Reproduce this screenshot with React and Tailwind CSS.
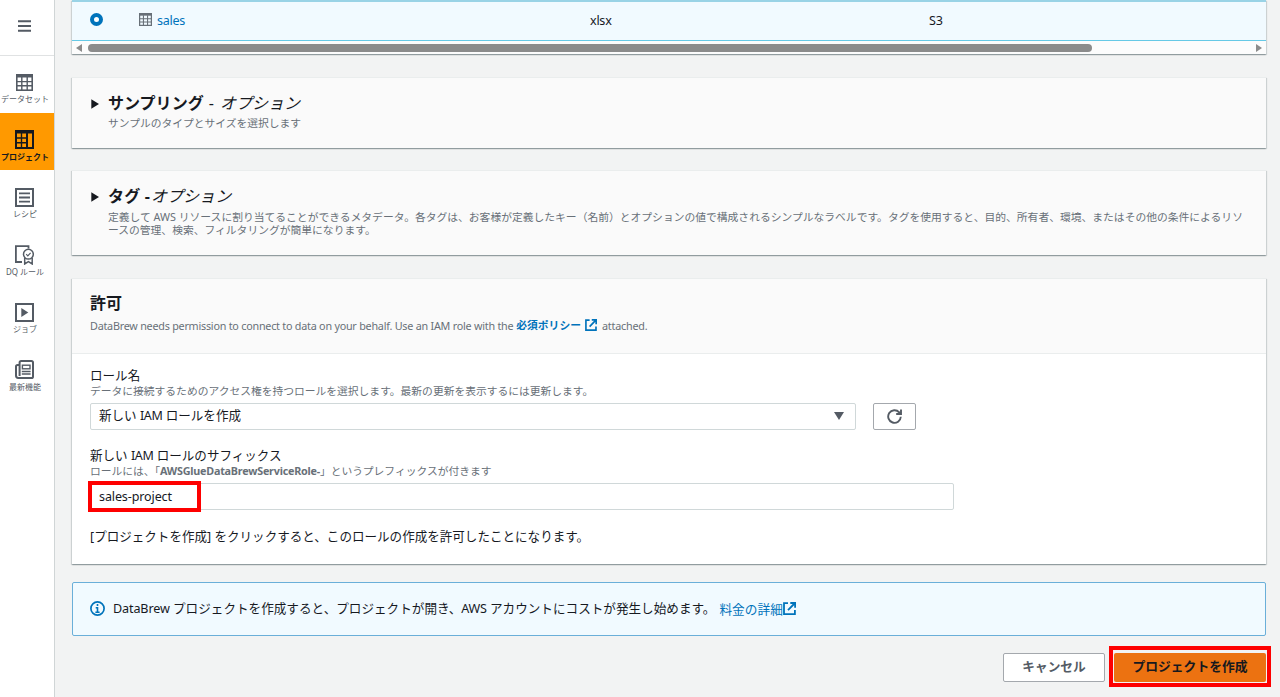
const cardShadow =
  "shadow-[0_1px_1px_0_rgba(0,28,36,0.22),1px_1px_1px_0_rgba(0,28,36,0.12),-1px_1px_1px_0_rgba(0,28,36,0.12)]";

function GridIcon({ className }) {
  return (
    <svg className={className} viewBox="0 0 17 17" fill="none" stroke="currentColor">
      <rect x="0.8" y="0.8" width="15.4" height="15.4" strokeWidth="1.6" />
      <path d="M1 2h15" strokeWidth="3" />
      <path d="M1 7.6h15M1 11.8h15M5.8 3v13M11.2 3v13" strokeWidth="1.4" />
    </svg>
  );
}

function ProjectIcon() {
  return (
    <svg className="h-[19px] w-[19px]" viewBox="0 0 19 19" fill="none" stroke="currentColor">
      <rect x="1" y="1" width="17" height="17" strokeWidth="2" />
      <path d="M1 2h17" strokeWidth="3" />
      <path d="M1 8h11M1 12.7h11M6.5 3v15" strokeWidth="1.4" />
      <path d="M12 3v15" strokeWidth="2" />
    </svg>
  );
}

function RecipeIcon() {
  return (
    <svg className="h-[19px] w-[19px]" viewBox="0 0 19 19" fill="none" stroke="currentColor" strokeWidth="2">
      <rect x="1" y="1" width="17" height="17" />
      <path d="M4 5.4h11M4 9.5h11M4 13.6h11" strokeWidth="1.9" />
    </svg>
  );
}

function RuleIcon() {
  return (
    <svg className="h-[20px] w-[19px]" viewBox="0 0 19 20" fill="none" stroke="currentColor" strokeWidth="1.5">
      <path d="M7 17H0.9V1.2h12.6v2.4" strokeWidth="1.8" />
      <circle cx="13.4" cy="9.2" r="4.9" />
      <path d="M11.2 9.2l1.6 1.6 2.8-3" strokeWidth="1.2" />
      <path d="M9.7 13v6l3.7-2.3 3.8 2.3v-6" strokeWidth="1.5" />
    </svg>
  );
}

function JobIcon() {
  return (
    <svg className="h-[19px] w-[19px]" viewBox="0 0 19 19" fill="none" stroke="currentColor" strokeWidth="2">
      <rect x="1" y="1" width="17" height="17" />
      <path d="M6.3 4.9l7 4.6-7 4.6z" fill="currentColor" stroke="none" />
    </svg>
  );
}

function NewsIcon() {
  return (
    <svg className="h-[19px] w-[19px]" viewBox="0 0 19 19" fill="none" stroke="currentColor" strokeWidth="2">
      <path d="M4.6 16V2.6Q4.6 1 6.2 1H16.4Q18 1 18 2.6V16.4Q18 18 16.4 18H3.2Q1 18 1 15.6V6.6Q1 5 2.6 5H4.4" />
      <rect x="7.4" y="5.2" width="7.6" height="3.6" strokeWidth="1.4" />
      <path d="M6.8 11.4h8.8M6.8 14.1h8.8" strokeWidth="1.5" />
    </svg>
  );
}

function ExternalIcon({ className }) {
  return (
    <svg className={className} viewBox="0 0 13 13" fill="none" stroke="currentColor" strokeWidth="1.8">
      <path d="M5 1.2H1v10.9h10.9V8" />
      <path d="M7.3 1h4.8v4.8M12 1L5 8.2" />
    </svg>
  );
}

const navItems = [
  { label: "データセット", icon: <GridIcon className="h-[17px] w-[17px]" /> },
  { label: "プロジェクト", icon: <ProjectIcon />, active: true },
  { label: "レシピ", icon: <RecipeIcon /> },
  { label: "DQ ルール", icon: <RuleIcon /> },
  { label: "ジョブ", icon: <JobIcon /> },
  { label: "最新機能", icon: <NewsIcon /> },
];

function Sidebar() {
  return (
    <nav className="flex w-[55px] shrink-0 flex-col border-r border-[#d0d5d6] bg-white text-[#545b64]">
      <div className="flex h-14 items-center justify-center border-b border-[#e0e2e3] pr-[5px]">
        <svg className="mt-[-3px] h-[12px] w-[13px]" viewBox="0 0 13 12" stroke="currentColor" strokeWidth="1.9">
          <path d="M0 1.3h13M0 6h13M0 10.7h13" />
        </svg>
      </div>
      <div className="mt-[-0.6px] flex flex-col">
        {navItems.map((item) => (
          <div
            key={item.label}
            className={
              item.active
                ? "flex h-[57.5px] flex-col items-center bg-[#ff9900] pr-[4px] pt-[16.6px] font-bold text-[#16191f]"
                : "flex h-[57.5px] flex-col items-center pr-[4px] pt-[16.6px]"
            }
          >
            <div className="flex h-[20px] items-center pr-px">{item.icon}</div>
            <span className="mt-[1.2px] whitespace-nowrap text-[8px] leading-[11px]">{item.label}</span>
          </div>
        ))}
      </div>
    </nav>
  );
}

function Caret() {
  return (
    <svg className="mt-[6px] h-[10px] w-[8px] shrink-0" viewBox="0 0 8 10">
      <path d="M0.3 0.3L8 5L0.3 9.7z" fill="#16191f" />
    </svg>
  );
}

export default function App() {
  return (
    <div className="flex h-[697px] w-[1280px] overflow-hidden bg-[#f2f3f3] font-['Noto_Sans','Noto_Sans_CJK_JP',sans-serif] text-[12.55px] leading-[18px] text-[#16191f]">
      <Sidebar />
      <main className="flex w-[1211px] flex-col pl-[17px]">
        <section className={`flex h-[54px] shrink-0 flex-col bg-white ${cardShadow}`}>
          <div className="flex h-[41px] items-center border-b border-t-2 border-b-[#66c9e6] border-t-[#99d3e6] bg-[#f1faff] pb-[3px]">
            <div className="ml-[18px] h-[13px] w-[13px] rounded-full border-4 border-[#0073bb] bg-white" />
            <GridIcon className="ml-[36px] h-[13px] w-[13px] text-[#687078]" />
            <span className="ml-[5px] w-[433px] pt-[2px] tracking-[-0.02em] text-[#0073bb]">sales</span>
            <span className="w-[339px] pt-[2px] tracking-[-0.02em]">xlsx</span>
            <span className="pt-[2px] tracking-[-0.02em]">S3</span>
          </div>
          <div className="flex h-[13px] items-center bg-[#fcfcfc] pl-[4px] pr-[4px]">
            <svg className="h-[8px] w-[6px]" viewBox="0 0 6 8">
              <path d="M6 0v8L0 4z" fill="#8b8b8b" />
            </svg>
            <div className="ml-[6px] h-[8px] w-[1004px] rounded-full bg-[#8b8b8b]" />
            <svg className="ml-auto h-[8px] w-[6px]" viewBox="0 0 6 8">
              <path d="M0 0v8L6 4z" fill="#8b8b8b" />
            </svg>
          </div>
        </section>

        <section className={`mt-[23px] flex h-[71px] shrink-0 gap-[9px] border-t border-[#eaeded] bg-[#fafafa] pl-[19px] pt-[15px] ${cardShadow}`}>
          <Caret />
          <div>
            <h2 className="whitespace-nowrap text-[16.05px] leading-[20px]">
              <b>サンプリング</b>
              <span className="ml-[5px] mr-[6px]">-</span>
              <i>オプション</i>
            </h2>
            <p className="mt-[3px] text-[10.77px] leading-[14px] text-[#687078]">サンプルのタイプとサイズを選択します</p>
          </div>
        </section>

        <section className={`mt-[22px] flex h-[85px] shrink-0 gap-[9px] border-t border-[#eaeded] bg-[#fafafa] pl-[19px] pt-[15px] ${cardShadow}`}>
          <Caret />
          <div>
            <h2 className="whitespace-nowrap text-[16.05px] leading-[20px]">
              <b className="tracking-[0.01em]">タグ -</b>
              <i className="ml-px">オプション</i>
            </h2>
            <p className="mt-[4px] whitespace-nowrap text-[10.79px] leading-[13.4px] text-[#687078]">
              定義して AWS リソースに割り当てることができるメタデータ。各タグは、お客様が定義したキー（名前）とオプションの値で構成されるシンプルなラベルです。タグを使用すると、目的、所有者、環境、またはその他の条件によるリソ
              <br />
              ースの管理、検索、フィルタリングが簡単になります。
            </p>
          </div>
        </section>

        <section className={`mt-[23px] flex h-[286px] shrink-0 flex-col border-t border-[#eaeded] bg-white ${cardShadow}`}>
          <header className="h-[75px] shrink-0 border-b border-[#eaeded] bg-[#fafafa] pl-[18px] pt-[14px]">
            <h2 className="text-[16px] font-bold leading-[20px]">許可</h2>
            <p className="mt-[3px] flex items-center whitespace-nowrap text-[10.77px] leading-[16px] text-[#687078]">
              <span className="pt-[2px] tracking-[-0.021em]">
                DataBrew needs permission to connect to data on your behalf. Use an IAM role with the
              </span>
              <b className="ml-[3px] text-[#0073bb]">必須ポリシー</b>
              <ExternalIcon className="ml-[4px] h-[12px] w-[12px] text-[#0073bb]" />
              <span className="ml-[5px] pt-[2px] tracking-[-0.018em]">attached.</span>
            </p>
          </header>
          <div className="flex flex-col pl-[18px] pt-[13px]">
            <label className="leading-[18px]">ロール名</label>
            <p className="mt-[-1px] text-[10.77px] leading-[14px] text-[#687078]">
              データに接続するためのアクセス権を持つロールを選択します。最新の更新を表示するには更新します。
            </p>
            <div className="mt-[5px] flex gap-[17px]">
              <div className="flex h-[27px] w-[766px] items-center justify-between rounded-[2px] border border-[#d0d8d9] pb-px pl-[8px] pr-[11px]">
                <span>
                  新しい <span className="tracking-[-0.03em]">IAM</span> ロールを作成
                </span>
                <svg className="h-[8px] w-[10px]" viewBox="0 0 10 8">
                  <path d="M0 0h10L5 8z" fill="#545b64" />
                </svg>
              </div>
              <button className="flex h-[27px] w-[43px] items-center justify-center rounded-[2px] border border-[#a4a8ad] text-[#545b64]">
                <svg className="h-[15px] w-[15px]" viewBox="0 0 15 15" fill="none" stroke="currentColor" strokeWidth="1.9">
                  <path d="M13.8 7.8A6.3 6.3 0 1 1 12.2 3.3L13.6 4.6" />
                  <path d="M14 0.4V5H9.2" />
                </svg>
              </button>
            </div>
            <label className="mt-[17px] leading-[18px]">
              新しい <span className="tracking-[-0.03em]">IAM</span> ロールのサフィックス
            </label>
            <p className="mt-[-1px] flex whitespace-nowrap text-[10.77px] leading-[14px] text-[#687078]">
              <span>ロールには、「</span>
              <b className="tracking-[-0.02em]">AWSGlueDataBrewServiceRole-</b>
              <span>」というプレフィックスが付きます</span>
            </p>
            <div className="relative mt-[5px] flex h-[27px] w-[864px] items-center rounded-[2px] border border-[#d0d8d9] pl-[8px]">
              <span className="tracking-[-0.01em]">sales-project</span>
              <div className="absolute left-[-3px] top-[-3px] h-[31px] w-[113px] border-4 border-[#fe0000]" />
            </div>
            <p className="mt-[18px]">[プロジェクトを作成] をクリックすると、このロールの作成を許可したことになります。</p>
          </div>
        </section>

        <section className="mt-[18px] flex h-[54px] shrink-0 items-center rounded-[2px] border border-[#6aafd9] bg-[#f1faff] pb-px pl-[17px]">
          <svg className="h-[15px] w-[15px]" viewBox="0 0 15 15" fill="none" stroke="#0073bb">
            <circle cx="7.5" cy="7.5" r="6.6" strokeWidth="1.7" />
            <path d="M7.5 3v2M5.7 6.7h1.8v4.2M5.4 11.2h4.2" strokeWidth="1.6" />
          </svg>
          <span className="ml-[8px] whitespace-nowrap text-[12.6px]">
            <span className="tracking-[-0.01em]">DataBrew</span> プロジェクトを作成すると、プロジェクトが開き、
            <span className="tracking-[-0.02em]">AWS</span> アカウントにコストが発生し始めます。
          </span>
          <span className="ml-[4px] whitespace-nowrap text-[12.7px] text-[#0073bb]">料金の詳細</span>
          <ExternalIcon className="h-[13px] w-[13px] text-[#0073bb]" />
        </section>

        <footer className="mt-[17px] flex h-[29px] shrink-0 justify-end gap-[9px] font-bold">
          <button className="h-[29px] w-[102px] rounded-[2px] border border-[#a4a8ad] bg-white pb-[3px] text-[12.7px] text-[#545b64]">キャンセル</button>
          <div className="relative">
            <button className="h-[29px] w-[152px] rounded-[2px] bg-[#ec7211] pb-[3px] text-[12.8px] text-[#16191f]">プロジェクトを作成</button>
            <div className="absolute left-[-5px] top-[-7px] h-[41px] w-[162px] border-4 border-[#fe0000]" />
          </div>
        </footer>
      </main>
    </div>
  );
}
